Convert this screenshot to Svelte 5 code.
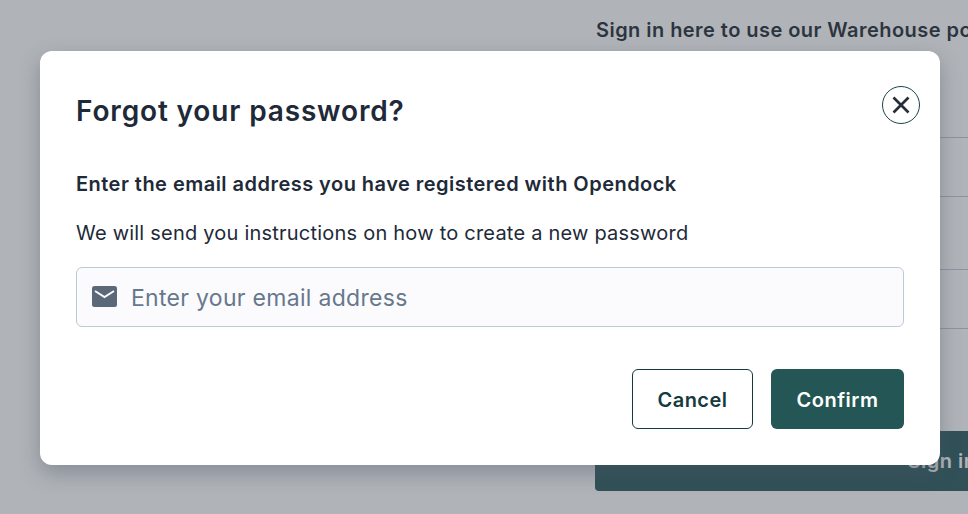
<script>
  let email = "";
</script>

<div class="page">
  <!-- sign in form sitting behind the dialog -->
  <section class="signin">
    <h2 class="signin-title">Sign in here to use our Warehouse portal</h2>
    <div class="field first"></div>
    <div class="field second"></div>
    <button class="signin-button">Sign in</button>
  </section>

  <div class="scrim">
    <div class="modal" role="dialog" aria-labelledby="forgot-title">
      <header class="modal-header">
        <h1 id="forgot-title">Forgot your password?</h1>
        <button class="close" aria-label="Close">
          <svg width="20" height="20" viewBox="0 0 20 20" fill="none">
            <path d="M2.5 2.5 17.5 17.5M17.5 2.5 2.5 17.5" stroke="#252d38" stroke-width="2.7" />
          </svg>
        </button>
      </header>

      <p class="lead">Enter the email address you have registered with Opendock</p>
      <p class="hint">We will send you instructions on how to create a new password</p>

      <label class="input">
        <svg width="26" height="22" viewBox="0 0 26 22" fill="none">
          <rect x="1" y="0" width="25" height="21" rx="2.5" fill="#5b6878" />
          <path d="M4 5 13.5 11 23 5" stroke="#fbfbff" stroke-width="2" fill="none" />
        </svg>
        <input type="email" placeholder="Enter your email address" bind:value={email} />
      </label>

      <footer class="actions">
        <button class="btn cancel">Cancel</button>
        <button class="btn confirm">Confirm</button>
      </footer>
    </div>
  </div>
</div>

<style>
  :global(body) {
    margin: 0;
    font-family: "Inter", "Liberation Sans", sans-serif;
  }

  .page {
    position: relative;
    width: 968px;
    height: 514px;
    overflow: hidden;
    background: #fff;
  }

  .signin {
    box-sizing: border-box;
    width: 968px;
    height: 514px;
    padding: 18px 0 0 596px;
    display: flex;
    flex-direction: column;
  }

  .signin-title {
    margin: 0;
    font-size: 20px;
    line-height: 24px;
    font-weight: 600;
    letter-spacing: 0.45px;
    color: #0d1824;
    white-space: nowrap;
    width: 372px;
    overflow: hidden;
  }

  .field {
    flex: none;
    width: 500px;
    height: 60px;
    border-top: 1px solid #b7c6d6;
    border-bottom: 1px solid #b7c6d6;
    box-sizing: border-box;
  }
  .first {
    margin-top: 95px;
  }
  .second {
    margin-top: 72px;
  }

  .signin-button {
    flex: none;
    width: 694px;
    height: 60px;
    margin: 102px 0 0 -1px;
    border: none;
    border-radius: 4px;
    background: #194b4f;
    color: #fff;
    font-family: inherit;
    font-size: 20px;
    font-weight: 600;
    letter-spacing: 0.5px;
  }

  .scrim {
    position: absolute;
    inset: 0;
    background: rgba(80, 86, 97, 0.45);
  }

  .modal {
    position: absolute;
    left: 40px;
    top: 51px;
    box-sizing: border-box;
    width: 900px;
    height: 414px;
    padding: 36px;
    background: #fff;
    border-radius: 12px;
    box-shadow: 0 8px 20px rgba(72, 84, 100, 0.4);
    color: #1e2a38;
  }

  .modal-header {
    display: flex;
    justify-content: space-between;
    align-items: flex-start;
    margin-right: -16px;
    height: 48px;
  }

  h1 {
    margin: 0;
    font-size: 28px;
    line-height: 48px;
    font-weight: 600;
    letter-spacing: 0.85px;
  }

  .close {
    width: 38px;
    height: 38px;
    margin-top: -1px;
    padding: 0;
    display: flex;
    align-items: center;
    justify-content: center;
    background: #fff;
    border: 1px solid #1e4347;
    border-radius: 50%;
  }

  .lead {
    margin: 36px 0 0;
    font-size: 20px;
    line-height: 26px;
    font-weight: 600;
    letter-spacing: 0.47px;
  }

  .hint {
    margin: 23px 0 0;
    font-size: 20px;
    line-height: 26px;
    font-weight: 400;
    letter-spacing: 0.22px;
  }

  .input {
    box-sizing: border-box;
    display: flex;
    align-items: center;
    gap: 14px;
    height: 60px;
    margin-top: 21px;
    padding: 0 14px;
    background: #fbfbfe;
    border: 1px solid #bccad6;
    border-radius: 6px;
  }

  .input input {
    flex: 1;
    border: none;
    outline: none;
    background: none;
    padding: 2px 0 0;
    font-family: inherit;
    font-size: 23px;
    letter-spacing: 0.3px;
    color: #1e2a38;
  }
  .input input::placeholder {
    color: #66788c;
    opacity: 1;
  }

  .actions {
    display: flex;
    justify-content: flex-end;
    gap: 18px;
    margin-top: 42px;
  }

  .btn {
    box-sizing: border-box;
    height: 60px;
    padding-top: 2px;
    border-radius: 6px;
    font-family: inherit;
    font-size: 20px;
    font-weight: 600;
    letter-spacing: 0.5px;
  }

  .cancel {
    width: 121px;
    background: #fff;
    border: 1px solid #163a3e;
    color: #163a3e;
  }

  .confirm {
    width: 133px;
    background: #235654;
    border: none;
    color: #fff;
  }
</style>
